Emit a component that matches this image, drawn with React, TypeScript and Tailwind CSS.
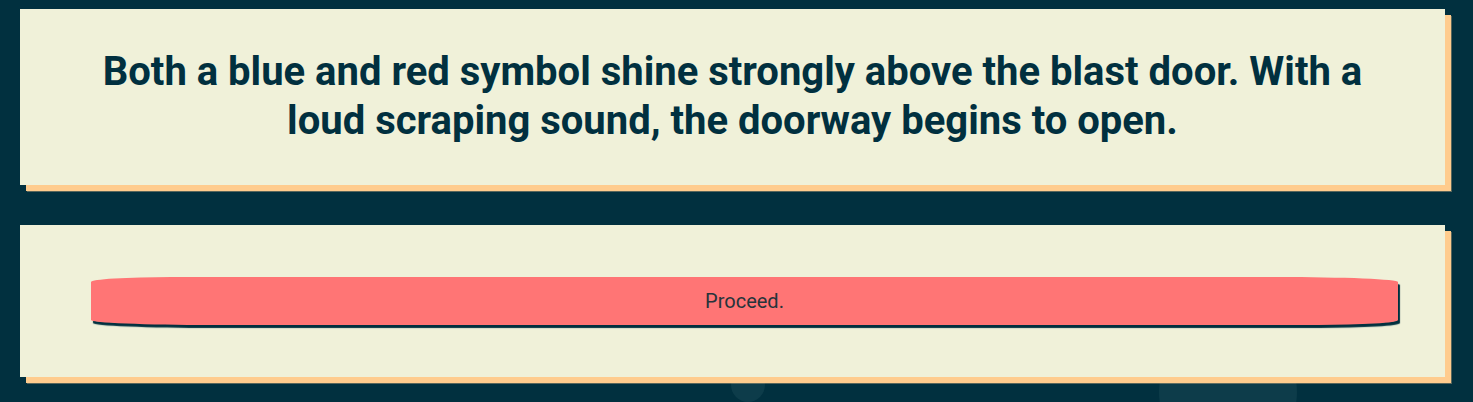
import React from "react";

export default function App() {
  return (
    <div className="relative w-[1473px] h-[402px] overflow-hidden bg-[#01303f]" style={{ fontFamily: "Roboto, 'Noto Sans', sans-serif" }}>
      <div className="absolute left-[731px] top-[368px] w-[34px] h-[34px] rounded-full bg-[#0d3c4a]" />
      <div className="absolute left-[1159px] top-[323px] w-[138px] h-[138px] rounded-full bg-[#0d3c4a]" />
      <div className="relative flex flex-col gap-[40px] pl-[20px] pr-[28px] pt-[9px]">
        <div className="bg-[#f0f1d9] shadow-[6px_6px_0_#ffcc8e,7px_7px_0_rgba(255,204,142,0.35)] px-[60px] pt-[38px] pb-[40px]">
          <h1 className="text-center text-[40px] leading-[49px] font-bold text-[#01303f]">
            Both a blue and red symbol shine strongly above the blast door. With a loud scraping sound, the doorway begins to open.
          </h1>
        </div>
        <div className="bg-[#f0f1d9] shadow-[6px_6px_0_#ffcc8e,7px_7px_0_rgba(255,204,142,0.35)] pl-[71px] pr-[47px] py-[52px]">
          <button className="w-full h-[48px] bg-[#ff7575] text-[20px] text-[#26343b] rounded-[80px_120px_80px_120px/5px_5px_5px_5px] shadow-[2px_3px_1px_#01303f]">
            Proceed.
          </button>
        </div>
      </div>
    </div>
  );
}
